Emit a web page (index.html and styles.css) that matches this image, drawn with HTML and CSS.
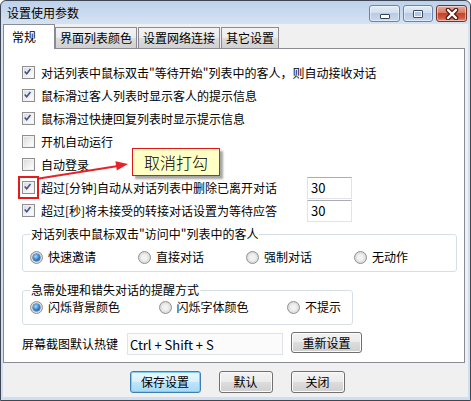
FILE: index.html
```html
<!DOCTYPE html>
<html lang="zh-CN">
<head>
    <meta charset="UTF-8">
    <title>设置使用参数</title>
    <link rel="stylesheet" href="styles.css">
</head>
<body>
<div class="window">
    <div class="titlebar">
        <span class="title">设置使用参数</span>
        <div class="caption">
            <span class="cap"><span class="min-glyph"></span></span>
            <span class="cap"><span class="max-glyph"></span></span>
            <span class="cap close">
                <svg width="14" height="12" viewBox="0 0 14 12">
                    <path d="M3 2 L11 10 M11 2 L3 10" stroke="#4a1a12" stroke-width="4.6" stroke-linecap="round" fill="none"/>
                    <path d="M3 2 L11 10 M11 2 L3 10" stroke="#fff" stroke-width="2.4" stroke-linecap="round" fill="none"/>
                </svg>
            </span>
        </div>
    </div>

    <div class="client">
        <!-- Tabs -->
        <div class="tabs">
            <span class="tab active">常规</span>
            <span class="tab">界面列表颜色</span>
            <span class="tab">设置网络连接</span>
            <span class="tab">其它设置</span>
        </div>

        <div class="panel">
            <div class="row"><span class="cb"><svg viewBox="0 0 13 13"><path d="M3 6.3 L5.4 9 L9.8 3.4"/></svg></span>对话列表中鼠标双击"等待开始"列表中的客人，则自动接收对话</div>
            <div class="row"><span class="cb"><svg viewBox="0 0 13 13"><path d="M3 6.3 L5.4 9 L9.8 3.4"/></svg></span>鼠标滑过客人列表时显示客人的提示信息</div>
            <div class="row"><span class="cb"><svg viewBox="0 0 13 13"><path d="M3 6.3 L5.4 9 L9.8 3.4"/></svg></span>鼠标滑过快捷回复列表时显示提示信息</div>
            <div class="row"><span class="cb"></span>开机自动运行</div>
            <div class="row"><span class="cb"></span>自动登录</div>

            <div class="timed">
                <div class="row"><span class="cb"><svg viewBox="0 0 13 13"><path d="M3 6.3 L5.4 9 L9.8 3.4"/></svg></span>超过[分钟]自动从对话列表中删除已离开对话</div>
                <input class="num" type="text" value="30">
                <div class="row"><span class="cb"><svg viewBox="0 0 13 13"><path d="M3 6.3 L5.4 9 L9.8 3.4"/></svg></span>超过[秒]将未接受的转接对话设置为等待应答</div>
                <input class="num" type="text" value="30">
            </div>

            <fieldset class="group group-visit">
                <legend>对话列表中鼠标双击"访问中"列表中的客人</legend>
                <div class="radios">
                    <span class="opt"><span class="rd on"></span>快速邀请</span>
                    <span class="opt"><span class="rd"></span>直接对话</span>
                    <span class="opt"><span class="rd"></span>强制对话</span>
                    <span class="opt"><span class="rd"></span>无动作</span>
                </div>
            </fieldset>

            <fieldset class="group group-alert">
                <legend>急需处理和错失对话的提醒方式</legend>
                <div class="radios">
                    <span class="opt"><span class="rd on"></span>闪烁背景颜色</span>
                    <span class="opt"><span class="rd"></span>闪烁字体颜色</span>
                    <span class="opt"><span class="rd"></span>不提示</span>
                </div>
            </fieldset>

            <div class="hotkey">
                <span class="hotkey-label">屏幕截图默认热键</span>
                <input class="hotkey-input" type="text" value="Ctrl + Shift + S" readonly>
                <button class="btn btn-reset">重新设置</button>
            </div>
        </div>

        <div class="actions">
            <button class="btn btn-default">保存设置</button>
            <button class="btn btn-small">默认</button>
            <button class="btn btn-small">关闭</button>
        </div>
    </div>

    <!-- annotation overlay -->
    <span class="mark"></span>
    <svg class="arrow" width="471" height="401" viewBox="0 0 471 401">
        <line x1="39" y1="178.5" x2="118" y2="166" stroke="#e4232b" stroke-width="2"/>
        <polygon points="128,164 115.4,161.2 116.8,170.4" fill="#e4232b"/>
    </svg>
    <div class="callout">取消打勾</div>
</div>
</body>
</html>
```

FILE: styles.css
```css
body { margin: 0; font-family: "Noto Sans CJK SC", "Microsoft YaHei", sans-serif; font-size: 12px; line-height: 16px; color: #000; }

.window { position: relative; width: 471px; height: 401px; box-sizing: border-box; border: 1px solid #3f4752; border-radius: 6px 6px 0 0; padding: 0 2px 3px 2px; background: linear-gradient(#bdd2eb, #d5e2f3 23px, #cfdef0); display: flex; flex-direction: column; overflow: hidden; }

.titlebar { height: 23px; display: flex; align-items: center; padding-left: 4px; flex-shrink: 0; }
.caption { margin-left: auto; align-self: flex-start; margin-top: 4px; padding-right: 1px; display: flex; gap: 3px; }
.cap { width: 31px; height: 17px; box-sizing: border-box; border: 1px solid #6b84a8; border-radius: 3px; background: linear-gradient(#e4edf7, #d0deef 45%, #b9cce5 50%, #c8d9ee); display: flex; align-items: center; justify-content: center; box-shadow: inset 0 0 0 1px rgba(255,255,255,.45); }
.cap + .cap { width: 30px; }
.cap.close { width: 31px; border-color: #7a3326; background: linear-gradient(#e9aa9c, #d97a64 45%, #c4432b 50%, #cd5a3f 80%, #e3947a); }
.min-glyph { width: 10px; height: 5px; box-sizing: border-box; border: 1px solid #34435a; background: #fff; margin-top: 6px; border-radius: 1px; }
.max-glyph { width: 10px; height: 8px; box-sizing: border-box; border: 1px solid #3c4c66; background: #b7c7dc; box-shadow: inset 0 0 0 1px #f4f7fb; border-radius: 1px; }

.client { flex: 1; background: #f0f0f0; padding-right: 3px; display: flex; flex-direction: column; }

.tabs { height: 24px; display: flex; align-items: flex-end; position: relative; z-index: 1; }
.tab { height: 21px; box-sizing: border-box; padding: 2px 4px 0; border: 1px solid #898c95; border-bottom: none; background: linear-gradient(#f3f3f3, #ebebeb 50%, #dddddd 50%, #d0d0d0); white-space: nowrap; }
.tab + .tab { margin-left: 1px; }
.tab.active { height: 25px; width: 52px; margin-bottom: -1px; padding: 4px 0 0 8px; background: #fff; }
.tab.active + .tab { margin-left: 0; }

.panel { height: 315px; box-sizing: border-box; border: 1px solid #898c95; background: #fff; padding: 12px 7px 0 18px; }

.row { height: 23px; display: flex; align-items: center; gap: 6px; white-space: nowrap; }
.cb { width: 13px; height: 13px; box-sizing: border-box; border: 1px solid #8f8f8f; background: linear-gradient(135deg, #d8d8d8, #f6f6f6 70%, #fff); box-shadow: inset 0 0 0 1px #f2f2f2; flex-shrink: 0; display: flex; }
.cb svg { width: 11px; height: 11px; margin: 0; }
.cb path { fill: none; stroke: #3d5389; stroke-width: 1.8; transform: translate(-1px, -1px); }

.timed { display: grid; grid-template-columns: 285px 45px; align-items: center; }
.num { width: 45px; height: 22px; box-sizing: border-box; border: 1px solid #e2e3ea; border-top-color: #abadb3; padding: 0 3px; font: inherit; font-size: 13px; }

.group { box-sizing: border-box; margin: 4px 0 0; border: 1px solid #d5dfe5; border-radius: 3px; padding: 7px 0 6px 7px; min-width: 0; }
.group legend { padding: 0 1px; margin-left: 0; line-height: 16px; }
.group-alert { width: 331px; margin-top: 10px; padding: 1px 0 9px 7px; }
.radios { display: flex; height: 16px; align-items: center; }
.opt { display: flex; align-items: center; gap: 5px; width: 108px; flex-shrink: 0; white-space: nowrap; }
.group-alert .opt { width: 128.5px; }
.group-alert .opt:last-child { width: auto; }
.rd { width: 13px; height: 13px; box-sizing: border-box; border-radius: 50%; border: 1px solid #8f9092; background: radial-gradient(circle at 50% 50%, #f2f2f2 30%, #d4d4d4 80%); position: relative; flex-shrink: 0; }
.rd.on::after { content: ""; position: absolute; left: 2px; top: 2px; width: 7px; height: 7px; border-radius: 50%; background: radial-gradient(circle at 40% 35%, #a8dcfb, #2a7ccc 55%, #104a86); box-shadow: 0 0 0 0.5px #1d4f7e; }

.hotkey { display: flex; align-items: flex-start; margin-top: 8px; }
.hotkey-label { width: 105px; line-height: 22px; }
.hotkey-input { width: 156px; height: 22px; box-sizing: border-box; border: 1px solid #e2e3ea; background: #fbfbfb; padding: 0 2px; font: inherit; font-size: 13px; }
.btn { height: 21px; box-sizing: border-box; border: 1px solid #707070; border-radius: 3px; background: linear-gradient(#f2f2f2, #ebebeb 50%, #dddddd 50%, #cfcfcf); font: inherit; padding: 0; color: #000; box-shadow: inset 0 0 0 1px #fcfcfc; }
.btn-reset { width: 71px; margin: -1px 0 0 8px; }

.actions { display: flex; justify-content: center; gap: 18px; margin-top: 8px; padding-left: 6px; }
.btn-default { width: 71px; height: 22px; border-color: #3c7fb1; box-shadow: inset 0 0 0 1px #7fd0f0; background: linear-gradient(#eaf6fd, #d9f0fc 50%, #bee6fd 50%, #a7d9f5); }
.btn-small { width: 54px; height: 22px; }

.mark { position: absolute; left: 17px; top: 175px; width: 21px; height: 23px; box-sizing: border-box; border: 2px solid #e31b1b; }
.arrow { position: absolute; left: -1px; top: -1px; pointer-events: none; }
.callout { position: absolute; left: 131px; top: 147px; width: 88px; height: 28px; box-sizing: border-box; border: 1px solid #e01818; background: #ffffc6; font-size: 16px; font-weight: 300; line-height: 26px; text-align: center; box-shadow: 3px 3px 2px rgba(0,0,0,.35); }
```
